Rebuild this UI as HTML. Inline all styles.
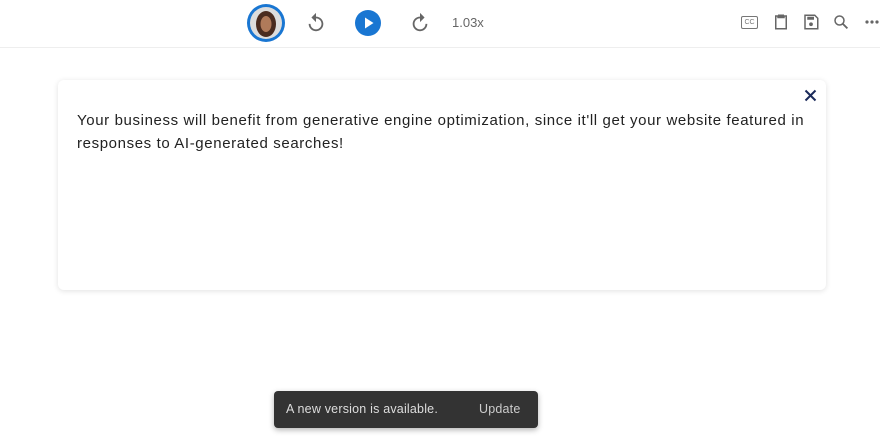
<!DOCTYPE html>
<html><head><style>
body{margin:0;width:880px;height:440px;background:#fff;font-family:"Liberation Sans",sans-serif;position:relative;overflow:hidden}
.top{position:absolute;left:0;top:0;width:880px;height:47px;border-bottom:1px solid #eee}
.ab{position:absolute}
.card{position:absolute;left:58px;top:80px;width:768px;height:210px;background:#fff;border-radius:6px;box-shadow:0 1px 6px rgba(0,0,0,.12)}
.txt{position:absolute;left:19px;top:30px;width:745px;font-size:15px;line-height:22.5px;color:#222;letter-spacing:.62px}
.toast{position:absolute;left:274px;top:391px;width:264px;height:37px;background:#333;border-radius:4px;box-shadow:0 2px 6px rgba(0,0,0,.3);color:#ddd;font-size:12.5px;letter-spacing:.2px}
</style></head><body>
<div class="top">
<svg class="ab" style="left:245px;top:3px" width="42" height="42"><circle cx="21" cy="20" r="19" fill="#1976d2"/><circle cx="21" cy="20" r="16" fill="#ddd"/><ellipse cx="21" cy="21" rx="10" ry="13" fill="#4a2c20"/><ellipse cx="21" cy="21" rx="5.5" ry="8" fill="#b07a5a"/></svg>
<svg class="ab" style="left:305px;top:12px" width="22" height="22" viewBox="0 0 24 24"><path d="M12 5V1L7 6l5 5V7c3.3 0 6 2.7 6 6s-2.7 6-6 6-6-2.7-6-6H4c0 4.4 3.6 8 8 8s8-3.6 8-8-3.6-8-8-8z" fill="#666"/></svg>
<svg class="ab" style="left:355px;top:10px" width="26" height="26"><circle cx="13" cy="13" r="13" fill="#1976d2"/><path d="M10 7.5v11l8.5-5.5z" fill="#fff"/></svg>
<svg class="ab" style="left:409px;top:12px" width="22" height="22" viewBox="0 0 24 24"><path d="M12 5V1l5 5-5 5V7c-3.3 0-6 2.7-6 6s2.7 6 6 6 6-2.7 6-6h2c0 4.4-3.6 8-8 8s-8-3.6-8-8 3.6-8 8-8z" fill="#666"/></svg>
<div class="ab" style="left:452px;top:15px;font-size:13px;color:#666">1.03x</div>
<div class="ab" style="left:741px;top:16px;width:15px;height:11px;border:1.5px solid #777;border-radius:2px;font-size:7px;color:#777;text-align:center;line-height:11px">CC</div>
<svg class="ab" style="left:772px;top:13px" width="18" height="18" viewBox="0 0 24 24"><path d="M5 4h3v2h8V4h3v17H5z" fill="none" stroke="#666" stroke-width="2"/><rect x="8" y="2" width="8" height="4" fill="#666"/></svg>
<svg class="ab" style="left:802px;top:13px" width="18" height="18" viewBox="0 0 24 24"><path d="M4 3h13l4 4v14H4z" fill="none" stroke="#666" stroke-width="2"/><rect x="7" y="5" width="9" height="4" fill="#666"/><circle cx="12" cy="15" r="2.5" fill="#666"/></svg>
<svg class="ab" style="left:832px;top:13px" width="18" height="18" viewBox="0 0 24 24"><circle cx="10" cy="10" r="6" fill="none" stroke="#666" stroke-width="2"/><path d="M14.5 14.5l6 6" stroke="#666" stroke-width="2.5"/></svg>
<svg class="ab" style="left:864px;top:19px" width="16" height="6"><circle cx="3" cy="3" r="1.6" fill="#666"/><circle cx="8" cy="3" r="1.6" fill="#666"/><circle cx="13" cy="3" r="1.6" fill="#666"/></svg>
</div>
<div class="card">
<svg class="ab" style="left:746px;top:9px" width="13" height="13"><path d="M1.5 1.5l10 10M11.5 1.5l-10 10" stroke="#1a2a5a" stroke-width="2"/></svg>
<div class="txt">Your business will benefit from generative engine optimization, since it'll get your website featured in responses to AI-generated searches!</div>
</div>
<div class="toast"><span class="ab" style="left:12px;top:11px">A new version is available.</span><span class="ab" style="left:205px;top:11px;color:#ccc">Update</span></div>
</body></html>
